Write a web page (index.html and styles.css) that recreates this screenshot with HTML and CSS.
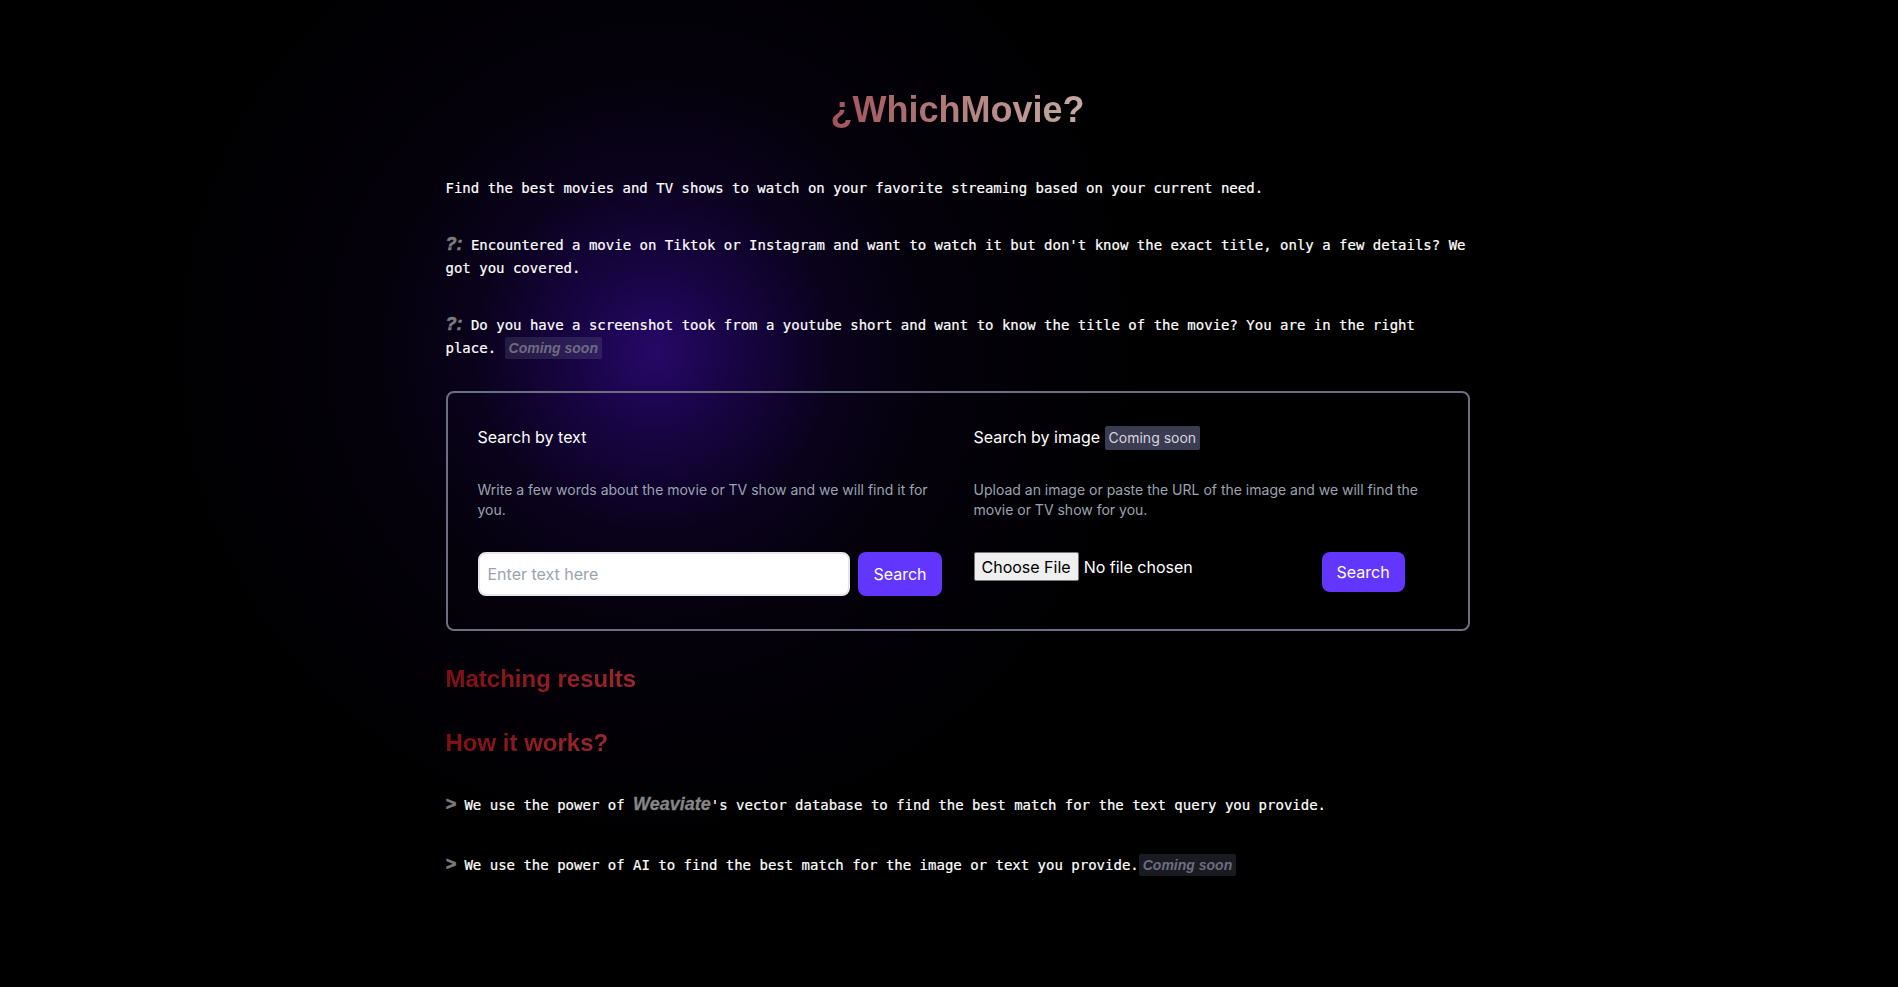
FILE: index.html
```html
<!DOCTYPE html>
<html lang="en">
<head>
<meta charset="utf-8">
<title>¿WhichMovie?</title>
<link rel="stylesheet" href="styles.css">
</head>
<body>
<main class="page">
  <h1 class="title">¿WhichMovie?</h1>
  <p class="intro">Find the best movies and TV shows to watch on your favorite streaming based on your current need.</p>
  <p class="intro"><span class="mark">?:</span> Encountered a movie on Tiktok or Instagram and want to watch it but don't know the exact title, only a few details? We got you covered.</p>
  <p class="intro"><span class="mark">?:</span> Do you have a screenshot took from a youtube short and want to know the title of the movie? You are in the right place. <span class="soon">Coming soon</span></p>

  <section class="search-box">
    <div class="search-col">
      <h2 class="col-title">Search by text</h2>
      <p class="col-desc">Write a few words about the movie or TV show and we will find it for you.</p>
      <form class="text-row">
        <input class="text-input" type="text" placeholder="Enter text here">
        <button class="btn" type="button">Search</button>
      </form>
    </div>
    <div class="search-col">
      <h2 class="col-title">Search by image <span class="badge">Coming soon</span></h2>
      <p class="col-desc">Upload an image or paste the URL of the image and we will find the movie or TV show for you.</p>
      <div class="file-row">
        <input class="file-input" type="file">
        <button class="btn" type="button">Search</button>
      </div>
    </div>
  </section>

  <h2 class="section-title">Matching results</h2>
  <h2 class="section-title">How it works?</h2>
  <p class="how-line"><span class="mark">&gt;</span> We use the power of <span class="brand">Weaviate</span>'s vector database to find the best match for the text query you provide.</p>
  <p class="how-line how-line-last"><span class="mark">&gt;</span> We use the power of AI to find the best match for the image or text you provide.<span class="soon">Coming soon</span></p>
</main>
</body>
</html>
```

FILE: styles.css
```css
html {
  background: #000;
}

body {
  margin: 0;
  padding: 90px 0 80px 17px;
  min-height: 100vh;
  box-sizing: border-box;
  color: #fff;
  background:
    radial-gradient(circle 280px at 654px 352px,
      rgba(40, 8, 108, 0.95) 0%,
      rgba(29, 5, 84, 0.72) 30%,
      rgba(16, 3, 48, 0.36) 65%,
      rgba(0, 0, 0, 0) 100%),
    radial-gradient(circle 500px at 654px 352px,
      rgba(14, 3, 36, 0.7) 0%,
      rgba(9, 2, 24, 0.45) 55%,
      rgba(5, 1, 14, 0.3) 85%,
      rgba(0, 0, 0, 0) 100%),
    #000;
}

.page {
  max-width: 1024px;
  margin: 0 auto;
}

.title {
  margin: 0 auto;
  width: fit-content;
  font: 700 36px/40px "Liberation Sans", Arial, sans-serif;
  background: linear-gradient(90deg, #a0535a, #c5aba4);
  -webkit-background-clip: text;
  background-clip: text;
  color: transparent;
}

.intro {
  margin: 34px 0 0;
  font: 14px/23px "DejaVu Sans Mono", monospace;
  color: #fff;
  -webkit-text-stroke: 0.2px #fff;
}

.title + .intro {
  margin-top: 47px;
}

.mark {
  font: italic 700 18px/1 "Liberation Sans", Arial, sans-serif;
  color: #7c7c7c;
  -webkit-text-stroke: 0.6px #7c7c7c;
}

.soon {
  display: inline-block;
  font: italic 700 14px/18px "Liberation Sans", Arial, sans-serif;
  color: #6c6c80;
  background: rgba(130, 128, 165, 0.2);
  padding: 2px 4px;
  border-radius: 2px;
  -webkit-text-stroke: 0;
}

/* Search box */
.search-box {
  margin-top: 31px;
  border: 2px solid #6e6e82;
  border-radius: 8px;
  padding: 30px 30px 33px;
  display: grid;
  grid-template-columns: 1fr 1fr;
  column-gap: 32px;
  font-family: Inter, "Noto Sans", sans-serif;
}

.col-title {
  margin: 0;
  font: 400 16px/28px Inter, "Noto Sans", sans-serif;
  color: #fff;
}

.badge {
  display: inline-block;
  font-size: 14px;
  line-height: 20px;
  padding: 2px 4px;
  background: #3b3b52;
  color: #d6d6de;
  border-radius: 2px;
}

.col-desc {
  margin: 29px 0 0;
  font-size: 14px;
  line-height: 20px;
  color: #9ca3af;
}

.text-row {
  margin: 32px 0 0;
  display: flex;
  gap: 8px;
}

.text-input {
  flex: 1;
  min-width: 0;
  height: 44px;
  box-sizing: border-box;
  border: 2px solid #e5e7eb;
  border-radius: 8px;
  padding: 0 8px;
  font: 16px Inter, "Noto Sans", sans-serif;
  color: #111;
  background: #fff;
  outline: none;
}

.text-input::placeholder {
  color: #9ca3af;
}

.btn {
  background: #6236ff;
  color: #fff;
  border: 0;
  border-radius: 8px;
  padding: 8px 15px;
  font: 400 16px/24px Inter, "Noto Sans", sans-serif;
  cursor: pointer;
}

.file-row {
  margin-top: 32px;
  display: flex;
  align-items: flex-start;
  gap: 8px;
}

.file-input {
  width: 340px;
  font: 16px/29px Inter, "Noto Sans", sans-serif;
  color: #fff;
}

.file-input::file-selector-button {
  font: 16px Inter, "Noto Sans", sans-serif;
  height: 29px;
  padding: 0 7px;
  margin-right: 5px;
  background: #efefef;
  color: #000;
  border: 1px solid #767676;
  border-radius: 2px;
}

/* Sections */
.section-title {
  margin: 32px 0 0;
  width: fit-content;
  font: 700 24px/32px "Liberation Sans", Arial, sans-serif;
  background: linear-gradient(90deg, #820e15, #9a2830);
  -webkit-background-clip: text;
  background-clip: text;
  color: transparent;
}

.how-line {
  margin: 35px 0 0;
  font: 14px/23px "DejaVu Sans Mono", monospace;
  color: #fff;
  -webkit-text-stroke: 0.2px #fff;
}

.how-line-last {
  margin-top: 37px;
}

.brand {
  font: italic 700 18px/1 "Liberation Sans", Arial, sans-serif;
  color: #858585;
  -webkit-text-stroke: 0.3px #858585;
}
```
